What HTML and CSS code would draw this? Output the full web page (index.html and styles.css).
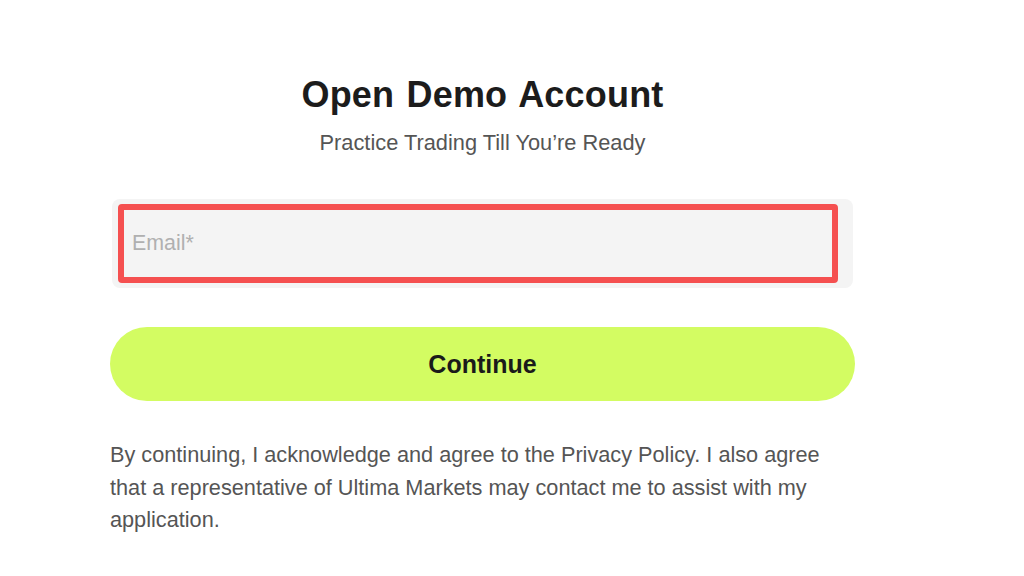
FILE: index.html
```html
<!DOCTYPE html>
<html lang="en">
<head>
<meta charset="utf-8">
<title>Open Demo Account</title>
<link rel="stylesheet" href="styles.css">
</head>
<body>
<main class="card">
  <header class="head">
    <h1 class="title">Open Demo Account</h1>
    <p class="subtitle">Practice Trading Till You’re Ready</p>
  </header>
  <div class="field">
    <div class="field-inner">
      <span class="placeholder">Email*</span>
    </div>
  </div>
  <button class="btn" type="button">Continue</button>
  <p class="note">By continuing, I acknowledge and agree to the Privacy Policy. I also agree that a representative of Ultima Markets may contact me to assist with my application.</p>
</main>
</body>
</html>
```
FILE: styles.css
```css
* { box-sizing: border-box; }
html, body { margin: 0; padding: 0; background: #ffffff; }
body { font-family: "Liberation Sans", Arial, sans-serif; }
.card {
  width: 745px;
  margin-left: 110px;
  padding-top: 74px;
  display: flex;
  flex-direction: column;
}
.head { text-align: center; }
.title {
  margin: 0;
  font-size: 36px;
  line-height: 42px;
  font-weight: 700;
  letter-spacing: 0.2px;
  color: #1c1c1c;
  word-spacing: 2px;
}
.subtitle {
  margin: 16px 0 0;
  font-size: 21.8px;
  line-height: 22px;
  color: #555555;
}
.field {
  margin: 45px 2px 0;
  height: 89px;
  background: #f4f4f4;
  border-radius: 8px;
  padding: 5px 15px 5px 6px;
}
.field-inner {
  height: 100%;
  border: 6px solid #f55050;
  border-radius: 4px;
  display: flex;
  align-items: center;
  padding-left: 8px;
}
.placeholder {
  font-size: 21.4px;
  color: #b0b0b0;
}
.btn {
  margin-top: 39px;
  height: 74px;
  border: none;
  border-radius: 37px;
  background: #d3fc62;
  font-family: "Liberation Sans", Arial, sans-serif;
  font-size: 25px;
  font-weight: 700;
  color: #1a1a1a;
}
.note {
  margin: 38px 0 0;
  font-size: 21.7px;
  line-height: 32.5px;
  color: #555555;
}
```
